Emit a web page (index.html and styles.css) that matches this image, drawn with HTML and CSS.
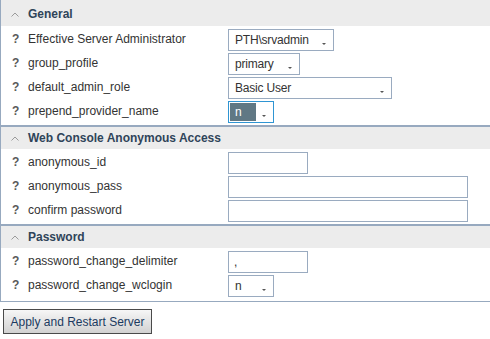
FILE: index.html
```html
<!DOCTYPE html>
<html lang="en">
<head>
    <meta charset="UTF-8">
    <title>Server Settings</title>
    <link rel="stylesheet" href="styles.css">
</head>
<body>
    <div class="settings">
        <div class="section">
            <div class="section-head first">
                <svg class="toggle" width="8" height="5" viewBox="0 0 8 5"><path d="M0.5 4.5 L4 1 L7.5 4.5" fill="none" stroke="#9a9a9a" stroke-width="1"/></svg>
                General
            </div>
            <div class="rows">
                <div class="row">
                    <span class="help">?</span><span class="label">Effective Server Administrator</span>
                    <div class="dropdown w106"><span class="value">PTH\srvadmin</span><span class="arrow"></span></div>
                </div>
                <div class="row">
                    <span class="help">?</span><span class="label">group_profile</span>
                    <div class="dropdown w72"><span class="value">primary</span><span class="arrow"></span></div>
                </div>
                <div class="row">
                    <span class="help">?</span><span class="label">default_admin_role</span>
                    <div class="dropdown w164"><span class="value">Basic User</span><span class="arrow"></span></div>
                </div>
                <div class="row">
                    <span class="help">?</span><span class="label">prepend_provider_name</span>
                    <div class="dropdown w46 focused"><span class="value selected">n</span><span class="arrow"></span></div>
                </div>
            </div>
        </div>

        <div class="section">
            <div class="section-head">
                <svg class="toggle" width="8" height="5" viewBox="0 0 8 5"><path d="M0.5 4.5 L4 1 L7.5 4.5" fill="none" stroke="#9a9a9a" stroke-width="1"/></svg>
                Web Console Anonymous Access
            </div>
            <div class="rows">
                <div class="row">
                    <span class="help">?</span><span class="label">anonymous_id</span>
                    <input class="field w80" type="text">
                </div>
                <div class="row">
                    <span class="help">?</span><span class="label">anonymous_pass</span>
                    <input class="field w240" type="password">
                </div>
                <div class="row">
                    <span class="help">?</span><span class="label">confirm password</span>
                    <input class="field w240" type="password">
                </div>
            </div>
        </div>

        <div class="section last">
            <div class="section-head">
                <svg class="toggle" width="8" height="5" viewBox="0 0 8 5"><path d="M0.5 4.5 L4 1 L7.5 4.5" fill="none" stroke="#9a9a9a" stroke-width="1"/></svg>
                Password
            </div>
            <div class="rows">
                <div class="row">
                    <span class="help">?</span><span class="label">password_change_delimiter</span>
                    <input class="field w80" type="text" value=",">
                </div>
                <div class="row">
                    <span class="help">?</span><span class="label">password_change_wclogin</span>
                    <div class="dropdown w46"><span class="value">n</span><span class="arrow"></span></div>
                </div>
            </div>
        </div>
    </div>

    <button class="apply-btn">Apply and Restart Server</button>
</body>
</html>
```

FILE: styles.css
```css
body {
    margin: 0;
    font-family: "Liberation Sans", Arial, sans-serif;
    font-size: 12px;
    color: #333;
    background-color: #fff;
    overflow: hidden;
}
.settings {
    border-left: 1px solid #97a9bf;
    border-bottom: 1px solid #97a9bf;
}
.section {
    border-bottom: 2px solid #97a9bf;
}
.section.last {
    border-bottom: none;
    padding-bottom: 2px;
}
.section-head {
    height: 22px;
    display: flex;
    align-items: center;
    padding-left: 10px;
    background-color: #ececec;
    font-weight: bold;
    font-size: 12px;
    color: #2f4459;
}
.section-head.first {
    height: 26px;
    padding-top: 2px;
    box-sizing: border-box;
}
.toggle {
    margin-right: 9px;
}
.rows {
    padding: 1px 0 2px 0;
}
.row {
    display: grid;
    grid-template-columns: 16px 200px auto;
    align-items: center;
    height: 24px;
    padding-left: 11px;
}
.help {
    font-weight: bold;
    color: #5a5a5a;
}
.label {
    color: #333;
}
.dropdown,
.field {
    box-sizing: border-box;
    height: 22px;
    border: 1px solid #9aabc0;
    background-color: #fff;
    margin-top: 2px;
}
.field {
    font-family: "Liberation Sans", Arial, sans-serif;
    font-size: 12px;
    color: #333;
    padding: 0 5px;
    outline: none;
}
.dropdown {
    position: relative;
    display: flex;
    align-items: center;
    padding-left: 6px;
}
.dropdown.focused {
    border-color: #2f95d3;
    padding-left: 1px;
}
.value {
    line-height: 18px;
    letter-spacing: -0.2px;
}
.value.selected {
    background-color: #607884;
    color: #fff;
    width: 21px;
    padding-left: 5px;
}
.arrow {
    position: absolute;
    right: 7px;
    top: 13px;
    width: 0;
    height: 0;
    border-left: 2px solid transparent;
    border-right: 2px solid transparent;
    border-top: 2px solid #555;
}
.w46 { width: 46px; }
.w72 { width: 72px; }
.w80 { width: 80px; }
.w106 { width: 106px; }
.w164 { width: 164px; }
.w240 { width: 240px; }
.apply-btn {
    margin: 7px 0 0 3px;
    width: 149px;
    height: 25px;
    font-family: "Liberation Sans", Arial, sans-serif;
    font-size: 12px;
    color: #1b3a60;
    border: 1px solid #4a4a4a;
    border-radius: 0;
    background: linear-gradient(#f6f6f6, #d2d2d2);
    padding: 0;
}
```
